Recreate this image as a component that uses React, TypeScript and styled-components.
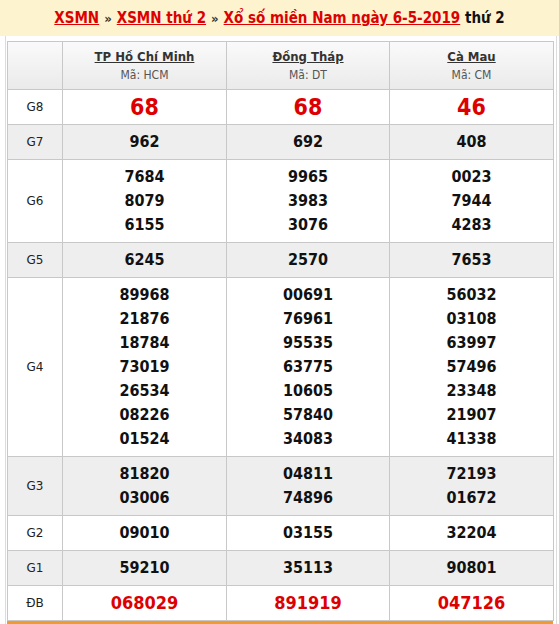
import React from "react";
import styled, { createGlobalStyle } from "styled-components";

const GlobalStyle = createGlobalStyle`
  html, body { margin: 0; padding: 0; background: #fff; }
  body { font-family: "DejaVu Sans Condensed", "DejaVu Sans", sans-serif; color: #222; }
`;

const Page = styled.div`
  width: 559px;
`;

const TopBar = styled.div`
  height: 36px;
  background: #fdf3cf;
  display: flex;
  align-items: center;
  justify-content: center;
  gap: 5px;
  font-size: 15px;
  font-weight: bold;
  color: #111;
`;

const Crumb = styled.a`
  color: #dd0000;
  text-decoration: underline;
`;

const Sep = styled.span`
  color: #333;
  font-size: 13px;
`;

const Panel = styled.div`
  margin: 0 2px 0 5px;
  border-left: 1px solid #dcdcdc;
  border-right: 1px solid #dcdcdc;
  padding: 5px 3px 0 1px;
`;

const Table = styled.table`
  width: 546px;
  table-layout: fixed;
  border-collapse: collapse;
  border: 1px solid #c8c8c8;
`;

const Row = styled.tr<{ $alt?: boolean }>`
  background: ${(p) => (p.$alt ? "#eeeeee" : "#ffffff")};
`;

const HeadRow = styled.tr`
  background: linear-gradient(#fafafa, #eaeaea);
`;

const HeadCell = styled.th`
  border: 1px solid #c8c8c8;
  height: 47px;
  padding: 0;
  text-align: center;
  vertical-align: middle;
  font-weight: normal;
`;

const City = styled.a`
  display: block;
  font-size: 13px;
  font-weight: bold;
  color: #333;
  text-decoration: underline;
  line-height: 19px;
`;

const Code = styled.div`
  font-size: 12px;
  color: #555;
  line-height: 19px;
`;

const LabelCell = styled.td`
  border: 1px solid #c8c8c8;
  padding: 5px 0;
  text-align: center;
  font-family: "DejaVu Sans", sans-serif;
  font-size: 12px;
  color: #222;
`;

const NumCell = styled.td<{ $size: number; $red?: boolean }>`
  border: 1px solid #c8c8c8;
  padding: 5px 0;
  text-align: center;
  font-weight: bold;
  font-size: ${(p) => p.$size}px;
  line-height: 24px;
  color: ${(p) => (p.$red ? "#dd0000" : "#111")};
`;

const Num = styled.div``;

const BottomBar = styled.div`
  width: 546px;
  height: 6px;
  background: #f39a2e;
`;

type Prize = { label: string; alt: boolean; size: number; red?: boolean; vals: string[][] };

const prizes: Prize[] = [
  { label: "G8", alt: false, size: 23, red: true, vals: [["68"], ["68"], ["46"]] },
  { label: "G7", alt: true, size: 16, vals: [["962"], ["692"], ["408"]] },
  {
    label: "G6",
    alt: false,
    size: 16,
    vals: [
      ["7684", "8079", "6155"],
      ["9965", "3983", "3076"],
      ["0023", "7944", "4283"],
    ],
  },
  { label: "G5", alt: true, size: 16, vals: [["6245"], ["2570"], ["7653"]] },
  {
    label: "G4",
    alt: false,
    size: 16,
    vals: [
      ["89968", "21876", "18784", "73019", "26534", "08226", "01524"],
      ["00691", "76961", "95535", "63775", "10605", "57840", "34083"],
      ["56032", "03108", "63997", "57496", "23348", "21907", "41338"],
    ],
  },
  {
    label: "G3",
    alt: true,
    size: 16,
    vals: [
      ["81820", "03006"],
      ["04811", "74896"],
      ["72193", "01672"],
    ],
  },
  { label: "G2", alt: false, size: 16, vals: [["09010"], ["03155"], ["32204"]] },
  { label: "G1", alt: true, size: 16, vals: [["59210"], ["35113"], ["90801"]] },
  { label: "ĐB", alt: false, size: 18, red: true, vals: [["068029"], ["891919"], ["047126"]] },
];

const cities = [
  { name: "TP Hồ Chí Minh", code: "HCM" },
  { name: "Đồng Tháp", code: "DT" },
  { name: "Cà Mau", code: "CM" },
];

export default function App() {
  return (
    <Page>
      <GlobalStyle />
      <TopBar>
        <Crumb>XSMN</Crumb>
        <Sep>»</Sep>
        <Crumb>XSMN thứ 2</Crumb>
        <Sep>»</Sep>
        <span>
          <Crumb>Xổ số miền Nam ngày 6-5-2019</Crumb> thứ 2
        </span>
      </TopBar>
      <Panel>
        <Table>
          <colgroup>
            <col style={{ width: 55 }} />
            <col style={{ width: 164 }} />
            <col style={{ width: 163 }} />
            <col style={{ width: 164 }} />
          </colgroup>
          <thead>
            <HeadRow>
              <HeadCell />
              {cities.map((c) => (
                <HeadCell key={c.code}>
                  <City>{c.name}</City>
                  <Code>Mã: {c.code}</Code>
                </HeadCell>
              ))}
            </HeadRow>
          </thead>
          <tbody>
            {prizes.map((p) => (
              <Row key={p.label} $alt={p.alt}>
                <LabelCell>{p.label}</LabelCell>
                {p.vals.map((col, i) => (
                  <NumCell key={i} $size={p.size} $red={p.red}>
                    {col.map((v, j) => (
                      <Num key={j}>{v}</Num>
                    ))}
                  </NumCell>
                ))}
              </Row>
            ))}
          </tbody>
        </Table>
        <BottomBar />
      </Panel>
    </Page>
  );
}
